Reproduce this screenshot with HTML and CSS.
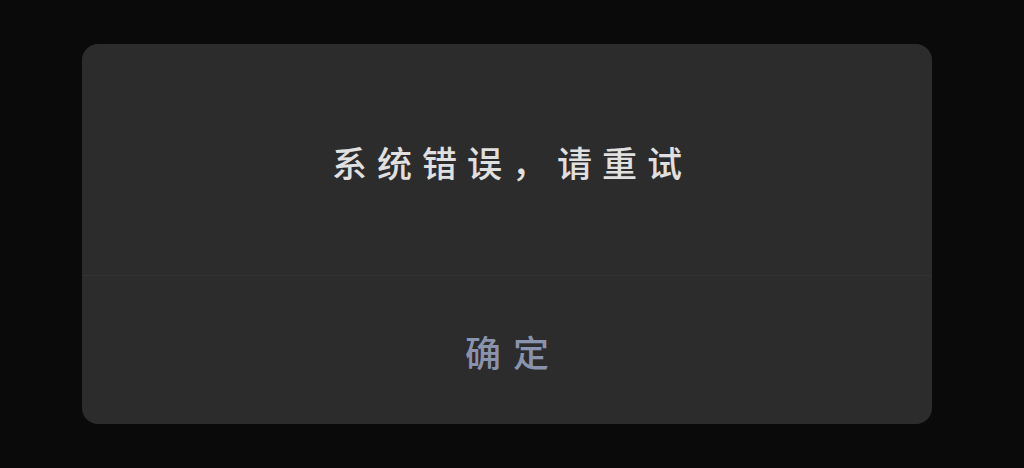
FILE: index.html
```html
<!DOCTYPE html>
<html lang="zh-CN">
<head>
    <meta charset="UTF-8">
    <meta name="viewport" content="width=device-width, initial-scale=1.0">
    <title>提示</title>
    <link rel="stylesheet" href="styles.css">
</head>
<body>

    <div class="dialog">
        <!-- 提示内容 -->
        <div class="dialog-body">
            <p class="dialog-message">系统错误，请重试</p>
        </div>

        <!-- 操作按钮 -->
        <div class="dialog-footer">
            <button class="dialog-btn" type="button">确定</button>
        </div>
    </div>

</body>
</html>
```

FILE: styles.css
```css
body {
    margin: 0;
    height: 468px;
    background-color: #0a0a0a;
    font-family: "Noto Sans CJK SC", sans-serif;
    display: flex;
    align-items: flex-start;
}

.dialog {
    margin: 44px 0 0 82px;
    width: 850px;
    height: 380px;
    background-color: #2c2c2c;
    border-radius: 16px;
    display: flex;
    flex-direction: column;
}

.dialog-body {
    height: 231px;
    display: flex;
    justify-content: center;
    align-items: center;
    border-bottom: 1px solid #323232;
}

.dialog-message {
    margin: 4px 0 0 10px;
    color: #e0e0e0;
    font-size: 35px;
    font-weight: 500;
    letter-spacing: 10px;
}

.dialog-footer {
    flex: 1;
    display: flex;
    justify-content: center;
    align-items: center;
}

.dialog-btn {
    margin: 2px 0 0 12px;
    padding: 0;
    border: none;
    background: none;
    color: #8a93ad;
    font-family: inherit;
    font-size: 36px;
    font-weight: 500;
    letter-spacing: 12px;
    cursor: pointer;
}
```
